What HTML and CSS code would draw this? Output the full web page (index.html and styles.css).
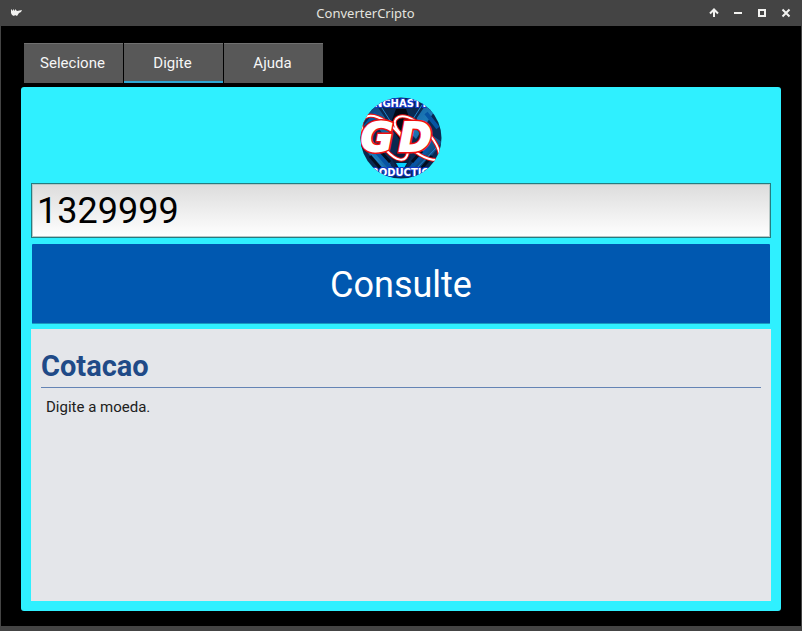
FILE: index.html
```html
<!DOCTYPE html>
<html lang="pt">
<head>
<meta charset="utf-8">
<title>ConverterCripto</title>
<link rel="stylesheet" href="styles.css">
</head>
<body>
<div class="window">
  <header class="titlebar">
    <svg class="app-icon" viewBox="0 0 14 14" aria-hidden="true"><path d="M2 3l2 2V3l2 2V3l2 2 5-1-1 2-2 1-2 3-2-1-1 1-2-1-1-2z" fill="#f2f2f0"/></svg>
    <h1 class="title">ConverterCripto</h1>
    <div class="controls">
      <button class="control" type="button" aria-label="Manter acima"><svg viewBox="0 0 10 10"><path d="M5 9V2M1 5.500L5 1.500L9 5.500" /></svg></button>
      <button class="control" type="button" aria-label="Minimizar"><svg viewBox="0 0 10 10"><path d="M1 5h8"/></svg></button>
      <button class="control" type="button" aria-label="Maximizar"><svg viewBox="0 0 10 10"><path d="M2 2h6v6H2z"/></svg></button>
      <button class="control" type="button" aria-label="Fechar"><svg viewBox="0 0 10 10"><path d="M1.500 1.500l7 7M8.500 1.500l-7 7"/></svg></button>
    </div>
  </header>
  <main class="content">
    <nav class="tabs">
      <button class="tab" type="button">Selecione</button>
      <button class="tab tab-active" type="button">Digite</button>
      <button class="tab" type="button">Ajuda</button>
    </nav>
    <section class="panel">
      <svg class="logo" viewBox="0 0 82 82" role="img" aria-label="GD">
        <defs>
          <clipPath id="disc"><circle cx="41" cy="41" r="40.500"/></clipPath>
          <linearGradient id="steel" x1="0" y1="0" x2="1" y2="1">
            <stop offset="0" stop-color="#0b3c78"/><stop offset=".5" stop-color="#1c7ab8"/><stop offset="1" stop-color="#052a5c"/>
          </linearGradient>
        </defs>
        <g clip-path="url(#disc)">
          <path d="M0 0h82v82H0z" fill="#0a2850"/>
          <path d="M8 15l9-6 17 25-8 8zM74 15l-9-6-17 25 8 8zM0 45l9-6 22 29-8 8zM82 45l-9-6-22 29 8 8z" fill="url(#steel)"/>
          <path d="M30 12h22l7 14-18 26-18-26z" fill="#082b53"/>
          <path d="M36 12h10l6 16-11 17-11-17z" fill="#020814"/>
          <path d="M20 8l18 28M62 8L44 36M5 50l22 24M77 50L55 73" stroke="#2284cc" fill="none"/>
          <path d="M13 51l20 23M69 51L49 73M4 31l12-15M78 31L66 16" stroke="#0754a3" stroke-width="4" fill="none"/>
          <path d="M10 59l12 14M72 59L60 73M20 54l10 11M62 54L52 65" stroke="#030c1e" stroke-width="3"/>
          <path d="M31 60l10-7 10 7-7 14h-6z" fill="#071d3d"/>
          <path d="M36 66h11l-3 5h-5z" fill="#05cfff"/>
          <g fill="none">
            <g stroke="#ee1010" stroke-width="4">
              <path d="M4 39C-2 24 4 17 14 19C26 22 36 32 44 43C53 55 66 64 79 63C82 55 75 42 63 31C53 20 41 16 36 22C33 26 36 32 42 38"/>
              <path d="M26 53C36 64 46 67 48 55"/>
            </g>
            <g stroke="#fff" stroke-width="2">
              <path d="M4 39C-2 24 4 17 14 19C26 22 36 32 44 43C53 55 66 64 79 63C82 55 75 42 63 31C53 20 41 16 36 22C33 26 36 32 42 38"/>
              <path d="M26 53C36 64 46 67 48 55"/>
            </g>
          </g>
          <g class="logo-outline"><text x="1" y="54">G</text><text x="39" y="54">D</text></g>
          <g class="logo-initials" aria-hidden="true"><text x="1" y="54">G</text><text x="39" y="54">D</text></g>
          <g class="logo-name"><text x="41" y="10">NGHASTY</text><text x="41" y="79">PRODUCTION</text></g>
        </g>
      </svg>
      <input class="coin" type="text" value="1329999" aria-label="Moeda">
      <button class="submit" type="button">Consulte</button>
      <article class="result">
        <h2 class="result-title">Cotacao</h2>
        <p class="result-text">Digite a moeda.</p>
      </article>
    </section>
  </main>
</div>
</body>
</html>
```

FILE: styles.css
```css
* { box-sizing: border-box; }

body {
  margin: 0;
  background: #444;
  font-family: Roboto, sans-serif;
}

button, input {
  margin: 0;
  font-family: inherit;
}

.window {
  display: flex;
  flex-direction: column;
  min-height: 100vh;
  padding: 0 1px 5px;
  background: #444;
}

.titlebar {
  display: grid;
  grid-template-columns: 1fr auto 1fr;
  align-items: center;
  height: 26px;
  padding: 0 3px 0 8px;
}

.app-icon {
  width: 14px;
  height: 14px;
}

.title {
  margin: 0 76px 0 0;
  color: #e3e3df;
  font: 400 13px/18px "Noto Sans", sans-serif;
}

.controls {
  display: flex;
  justify-content: flex-end;
}

.control {
  display: grid;
  place-items: center;
  width: 24px;
  height: 24px;
  padding: 0;
  border: 0;
  background: none;
}

.control svg {
  width: 10px;
  height: 10px;
  fill: none;
  stroke: #f2f2f0;
  stroke-width: 2;
}

.content {
  display: flex;
  flex: 1;
  flex-direction: column;
  gap: 4px;
  padding: 17px 20px 15px;
  background: #000;
}

.tabs {
  display: flex;
  gap: 1px;
  padding: 0 3px;
}

.tab {
  flex: 0 0 99px;
  height: 40px;
  padding: 0 2px 2px 0;
  border: 0;
  border-top: 1px solid #707070;
  background: #585858;
  color: #f6f6f6;
  font-size: 15px;
}

.tab-active {
  box-shadow: inset 0 -2px #2fa7d4;
}

.panel {
  display: flex;
  flex: 1;
  flex-direction: column;
  padding: 10px;
  border-radius: 3px;
  background: #2ff0ff;
}

.logo {
  align-self: center;
  width: 82px;
  height: 82px;
  margin-bottom: 4px;
}

.logo-outline,
.logo-initials {
  fill: #fff;
  stroke: #fff;
  stroke-width: 2px;
  font: italic 700 39px "DejaVu Sans", sans-serif;
}

.logo-outline {
  stroke: #ee1010;
  stroke-width: 5px;
}

.logo-name {
  fill: #fff;
  stroke: #1238c8;
  stroke-width: 2px;
  paint-order: stroke;
  text-anchor: middle;
  font: 700 10px "DejaVu Sans", sans-serif;
}

.coin {
  width: 100%;
  height: 55px;
  padding: 1px 5px 0;
  border: 1px solid #267b80;
  border-radius: 0;
  outline: 0;
  background: linear-gradient(#dcdcdc, #fff);
  box-shadow: inset 0 0 0 1px #b8c8c6;
  color: #000;
  font-size: 36px;
}

.submit {
  height: 80px;
  margin: 6px 1px 5px;
  padding: 2px 0 0;
  border: 0;
  border-bottom: 1px solid #1b9ac0;
  border-radius: 1px;
  background: #0058b0;
  color: #fff;
  font-size: 36px;
}

.result {
  flex: 1;
  padding: 20px 10px;
  background: #e4e6ea;
}

.result-title {
  margin: 0;
  padding-bottom: 4px;
  border-bottom: 1px solid #6484b5;
  color: #204a87;
  font-size: 29px;
  line-height: 34px;
}

.result-text {
  margin: 9px 5px;
  color: #202020;
  font-size: 15px;
  line-height: 20px;
}
```
